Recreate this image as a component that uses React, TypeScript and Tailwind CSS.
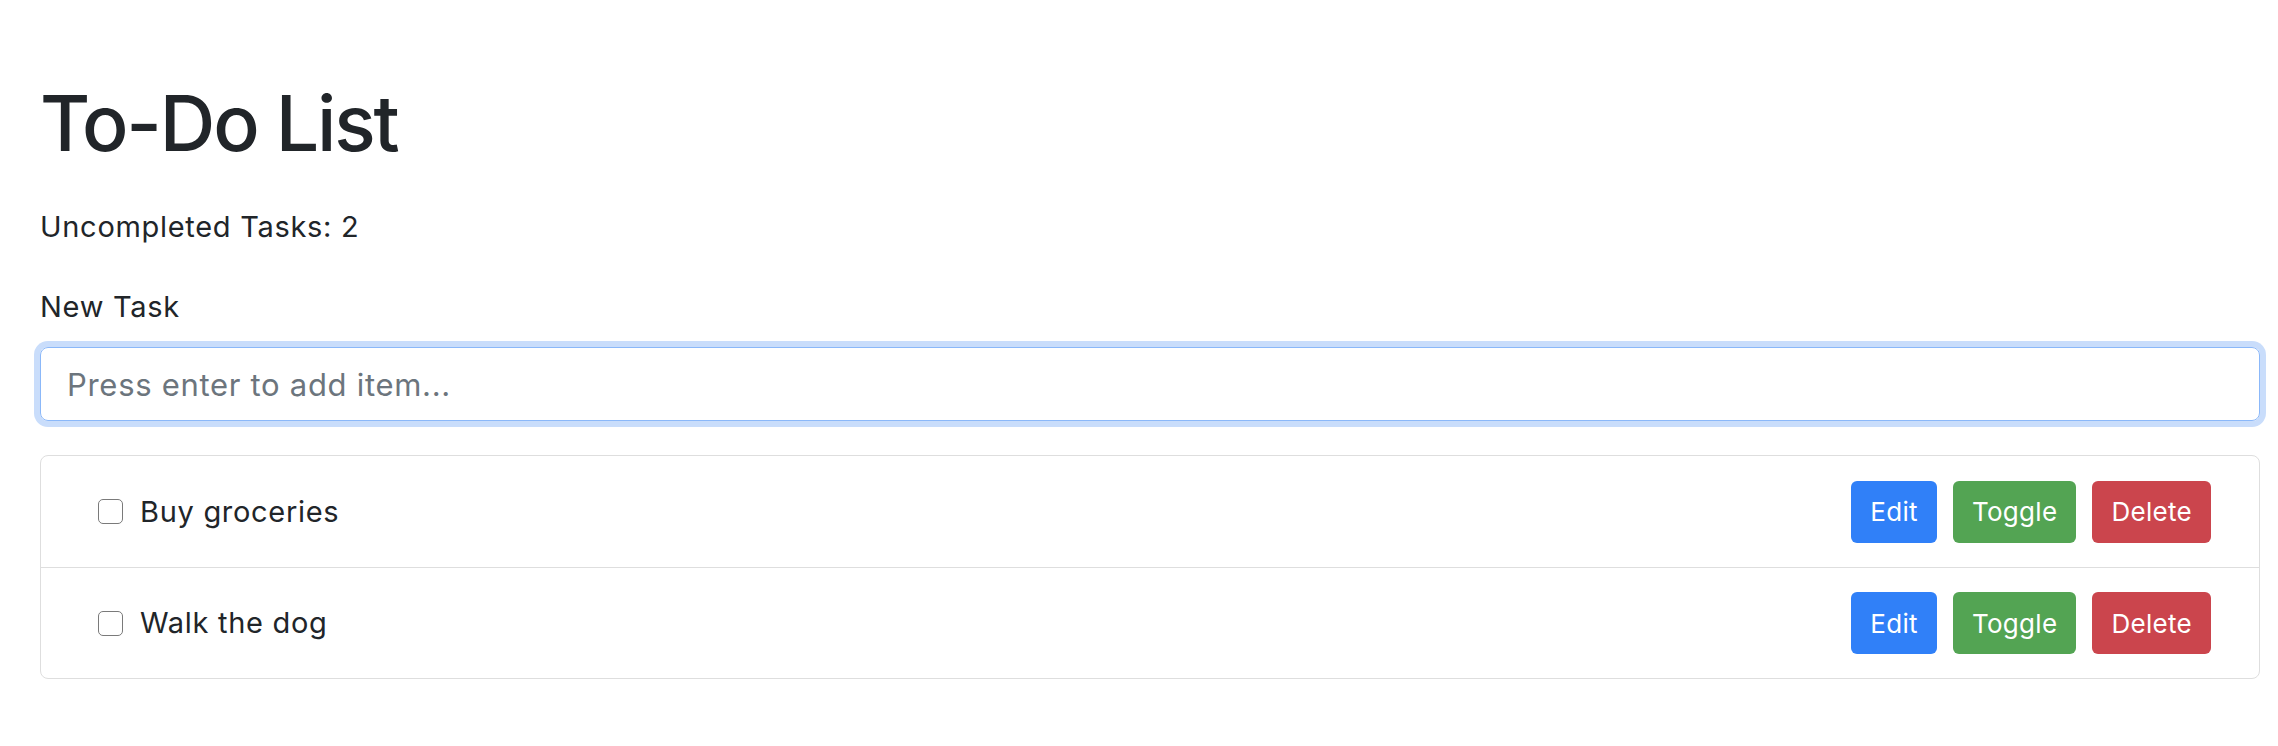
import { useState } from 'react'

type Task = { id: number; text: string; done: boolean }

const initialTasks: Task[] = [
  { id: 1, text: 'Buy groceries', done: false },
  { id: 2, text: 'Walk the dog', done: false },
]

export default function App() {
  const [tasks, setTasks] = useState<Task[]>(initialTasks)
  const [draft, setDraft] = useState('')

  const remaining = tasks.filter(t => !t.done).length

  const addTask = () => {
    if (!draft.trim()) return
    setTasks(prev => [...prev, { id: Date.now(), text: draft.trim(), done: false }])
    setDraft('')
  }

  const toggle = (id: number) =>
    setTasks(prev => prev.map(t => (t.id === id ? { ...t, done: !t.done } : t)))

  const remove = (id: number) => setTasks(prev => prev.filter(t => t.id !== id))

  return (
    <div className="min-h-screen bg-white pl-[40px] pr-[18px] pt-[75px] text-[#212529] font-['Inter',sans-serif]">
      {/* Header */}
      <h1 className="text-[77px] leading-[96px] font-medium tracking-[-2.2px]">To-Do List</h1>
      <p className="mt-[35px] text-[29px] leading-[42px] tracking-[0.7px]">Uncompleted Tasks: {remaining}</p>

      {/* New task */}
      <label htmlFor="new-task" className="mt-[38px] block text-[29px] leading-[42px] tracking-[0.7px]">
        New Task
      </label>
      <input
        id="new-task"
        value={draft}
        onChange={e => setDraft(e.target.value)}
        onKeyDown={e => e.key === 'Enter' && addTask()}
        placeholder="Press enter to add item..."
        className="mt-[19px] block h-[74px] w-full rounded-[8px] border border-[#8bb8f9] px-[26px] text-[31px] tracking-[0.7px] outline-none shadow-[0_0_0_6px_#c9ddfb] placeholder:text-[#6c757d]"
      />

      {/* Task list */}
      <ul className="mt-[34px] rounded-[8px] border border-[#dedede]">
        {tasks.map((task, i) => (
          <li
            key={task.id}
            className={`flex h-[111px] items-center justify-between pl-[57px] pr-[48px] ${i > 0 ? 'border-t border-[#dedede]' : ''}`}
          >
            <label className="flex items-center gap-[17px] text-[29px] tracking-[0.7px]">
              <input
                type="checkbox"
                checked={task.done}
                onChange={() => toggle(task.id)}
                className="h-[25px] w-[25px] appearance-none rounded-[5px] border-[1.5px] border-[#7a7a7a] bg-white checked:bg-[#3080f8]"
              />
              <span className={task.done ? 'line-through' : ''}>{task.text}</span>
            </label>
            <div className="flex gap-[16px] text-[26px] tracking-[0.3px] text-white">
              <button className="h-[62px] rounded-[6px] bg-[#3080f8] px-[19px]">Edit</button>
              <button onClick={() => toggle(task.id)} className="h-[62px] rounded-[6px] bg-[#53a453] px-[19px]">
                Toggle
              </button>
              <button onClick={() => remove(task.id)} className="h-[62px] rounded-[6px] bg-[#cb454d] px-[19px]">
                Delete
              </button>
            </div>
          </li>
        ))}
      </ul>
    </div>
  )
}
